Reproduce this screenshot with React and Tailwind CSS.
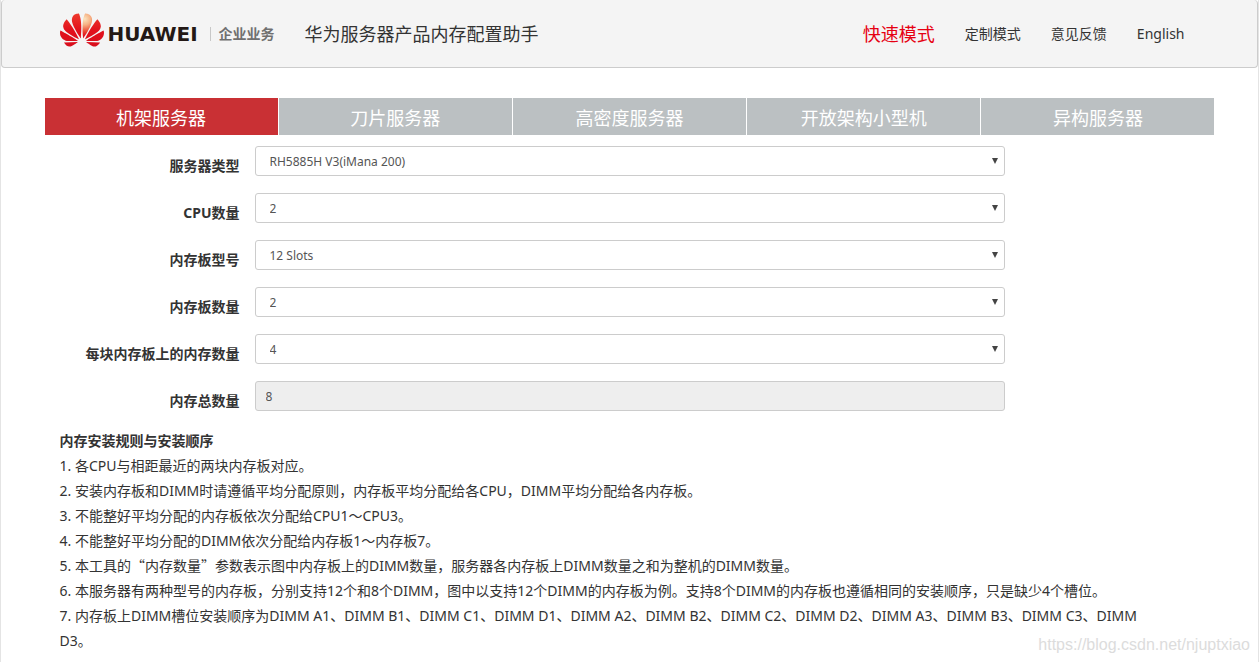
import { useState } from "react";

const tabs = ["机架服务器", "刀片服务器", "高密度服务器", "开放架构小型机", "异构服务器"];

const navLinks = ["快速模式", "定制模式", "意见反馈", "English"];

const fields = [
  { id: "server", label: "服务器类型", options: ["RH5885H V3(iMana 200)"] },
  { id: "cpu", label: "CPU数量", options: ["2", "4"] },
  { id: "board", label: "内存板型号", options: ["12 Slots", "8 Slots"] },
  { id: "boardCount", label: "内存板数量", options: ["2", "4", "6", "8"] },
  { id: "perBoard", label: "每块内存板上的内存数量", options: ["4", "8", "12"] },
];

const Quote = ({ children }) => <span className="font-['Noto_Sans_CJK_SC',sans-serif]">{children}</span>;

const rules = [
  "各CPU与相距最近的两块内存板对应。",
  "安装内存板和DIMM时请遵循平均分配原则，内存板平均分配给各CPU，DIMM平均分配给各内存板。",
  "不能整好平均分配的内存板依次分配给CPU1～CPU3。",
  "不能整好平均分配的DIMM依次分配给内存板1～内存板7。",
  <>
    本工具的<Quote>“</Quote>内存数量<Quote>”</Quote>参数表示图中内存板上的DIMM数量，服务器各内存板上DIMM数量之和为整机的DIMM数量。
  </>,
  "本服务器有两种型号的内存板，分别支持12个和8个DIMM，图中以支持12个DIMM的内存板为例。支持8个DIMM的内存板也遵循相同的安装顺序，只是缺少4个槽位。",
  "内存板上DIMM槽位安装顺序为DIMM A1、DIMM B1、DIMM C1、DIMM D1、DIMM A2、DIMM B2、DIMM C2、DIMM D2、DIMM A3、DIMM B3、DIMM C3、DIMM D3。",
];

const Logo = () => (
  <a href="#" className="flex items-center pb-2">
    <svg viewBox="0 2.9 24 18.2" className="h-[34px] w-11" aria-hidden="true">
      <defs>
        <radialGradient id="petal" gradientUnits="userSpaceOnUse" cx="13.5" cy="6" r="9">
          <stop offset="0" stopColor="#fbe3bd" />
          <stop offset="0.35" stopColor="#f6b184" />
          <stop offset="0.75" stopColor="#ec4a35" />
          <stop offset="1" stopColor="#e0101c" />
        </radialGradient>
        <linearGradient id="red" gradientUnits="userSpaceOnUse" x1="12" y1="3" x2="12" y2="21">
          <stop offset="0" stopColor="#ee3a2c" />
          <stop offset="0.5" stopColor="#e2111c" />
          <stop offset="1" stopColor="#d80d1c" />
        </linearGradient>
      </defs>
      <g fill="url(#red)">
        <path d="M3.67 6.14S1.82 7.91 1.72 9.78v.35c.08 1.51 1.22 2.4 1.22 2.4 1.83 1.79 6.26 4.04 7.3 4.55 0 0 .06.03.1-.01l.02-.04v-.04C7.52 10.8 3.67 6.14 3.67 6.14z" />
        <path d="M9.65 18.6c-.02-.08-.1-.08-.1-.08l-7.38.26c.8 1.43 2.15 2.53 3.56 2.2.96-.25 3.16-1.78 3.88-2.3.06-.05.04-.09.04-.09z" />
        <path d="M9.73 17.82C6.49 15.63.21 12.28.21 12.28c-.15.46-.2.9-.21 1.3v.07c0 1.07.4 1.82.4 1.82.8 1.69 2.34 2.2 2.34 2.2.7.3 1.4.31 1.4.31.12.02 4.4 0 5.54 0 .05 0 .08-.05.08-.05v-.06c0-.03-.03-.05-.03-.05z" />
        <path d="M9.06 3.19a3.42 3.42 0 00-2.57 3.15v.41c.03.6.16 1.05.16 1.05.66 2.9 3.86 7.65 4.55 8.65.05.05.1.03.1.03a.1.1 0 00.06-.1c1.06-10.6-1.11-13.42-1.11-13.42-.32.02-1.19.23-1.19.23z" />
        <path d="M14.44 18.53s-.07 0-.09.05c0 0-.01.07.03.1.7.51 2.85 2 3.88 2.3 0 0 .16.05.43.06h.14c.69-.02 1.9-.37 3-2.26l-7.4-.25z" />
        <path d="M22.27 10.12c.14-2.06-1.94-3.97-1.94-3.98 0 0-3.85 4.66-6.67 10.8 0 0-.03.08.02.13l.04.01h.06c1.06-.53 5.46-2.77 7.28-4.54 0 0 1.15-.93 1.21-2.42z" />
        <path d="M23.79 12.26s-6.28 3.37-9.52 5.55c0 0-.05.04-.03.11 0 0 .03.06.07.06 1.16 0 5.56 0 5.67-.02 0 0 .57-.02 1.27-.29 0 0 1.56-.5 2.37-2.27 0 0 .73-1.45.17-3.14z" />
      </g>
      <path
        fill="url(#petal)"
        d="M17.36 5.46s-.49-1.8-2.44-2.28c0 0-.57-.14-1.17-.22 0 0-2.18 2.81-1.12 13.43.01.07.06.08.06.08.07.03.1-.03.1-.03.72-1.03 3.9-5.76 4.55-8.64 0 0 .36-1.4.02-2.34z"
      />
    </svg>
    <span className="ml-1 pt-2 font-['DejaVu_Sans',sans-serif] text-xl leading-6 font-bold text-[#231815]">HUAWEI</span>
    <span className="mt-2 ml-3 border-l border-[#c8c8c8] pl-2 text-sm leading-[14px] font-bold text-[#707070]">企业业务</span>
  </a>
);

const App = () => {
  const [activeTab, setActiveTab] = useState(0);

  return (
    <div className="relative min-h-screen border-x border-[#e4e4e4] bg-white font-['Noto_Sans','Noto_Sans_CJK_SC',sans-serif] text-sm text-[#333]">
      <header className="rounded-[4px] border border-t-0 border-[#ccc] bg-[#f4f4f4]">
        <div className="mx-auto flex h-[67px] max-w-[1170px] items-center px-[15px]">
          <Logo />
          <h1 className="ml-[30px] text-lg">华为服务器产品内存配置助手</h1>
          <nav className="mr-[15px] ml-auto flex items-center gap-[30px]">
            {navLinks.map((link, i) => (
              <a key={link} href="#" className={i === 0 ? "text-lg text-[#e60012]" : "text-[#333]"}>
                {link}
              </a>
            ))}
          </nav>
        </div>
      </header>

      <main className="mx-auto mt-[30px] max-w-[1170px]">
        <div className="grid grid-cols-5 gap-px">
          {tabs.map((tab, i) => (
            <button
              key={tab}
              type="button"
              onClick={() => setActiveTab(i)}
              className={`h-[37px] pt-0.5 text-lg leading-8 text-white ${activeTab === i ? "bg-[#c93034]" : "bg-[#bbc0c2]"}`}
            >
              {tab}
            </button>
          ))}
        </div>

        <form className="mt-[11px]">
          {fields.map((field) => (
            <div key={field.id} className="mb-[17px] grid grid-cols-12">
              <label htmlFor={field.id} className="col-span-2 pt-[10px] text-right leading-5 font-bold">
                {field.label}
              </label>
              <div className="relative col-span-8 mx-[15px]">
                <select id={field.id} className="block h-[30px] w-full appearance-none rounded-[3px] border border-[#ccc] bg-white pt-0.5 pr-6 pl-[14px] text-xs text-[#555]">
                  {field.options.map((option) => (
                    <option key={option}>{option}</option>
                  ))}
                </select>
                <svg viewBox="0 0 6 6" className="pointer-events-none absolute top-3 right-[7px] size-[6px]" aria-hidden="true">
                  <path d="M0 0h6L3 6z" fill="#444" />
                </svg>
              </div>
            </div>
          ))}

          <div className="mb-[17px] grid grid-cols-12">
            <label htmlFor="total" className="col-span-2 pt-[10px] text-right leading-5 font-bold">
              内存总数量
            </label>
            <div className="col-span-8 mx-[15px]">
              <input id="total" type="text" value="8" readOnly className="block h-[30px] w-full rounded-[3px] border border-[#ccc] bg-[#eee] px-[10px] text-xs text-[#555]" />
            </div>
          </div>
        </form>

        <section className="pr-12 pl-[15px] leading-[25px]">
          <h2 className="font-bold">内存安装规则与安装顺序</h2>
          {rules.map((rule, i) => (
            <p key={i}>
              {i + 1}. {rule}
            </p>
          ))}
        </section>
      </main>

      <span className="absolute right-2 bottom-[3px] font-['Liberation_Sans',sans-serif] text-base leading-7 text-[#dcdcdc]">https://blog.csdn.net/njuptxiao</span>
    </div>
  );
};

export default App;
